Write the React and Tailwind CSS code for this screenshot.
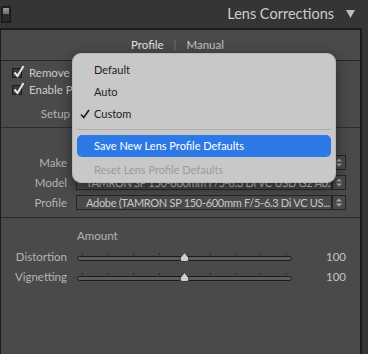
import React from "react";

const font = { fontFamily: "Lato, 'Noto Sans', sans-serif" };

function SwitchIcon() {
  return (
    <div className="w-[10px] h-[17px] border border-[#1a1a1a] bg-[#222] flex flex-col p-[1px]">
      <div className="flex-1 bg-gradient-to-b from-[#9a9a9a] to-[#6e6e6e]" />
      <div className="flex-1 bg-[#2c2c2c]" />
    </div>
  );
}

function Checkbox() {
  return (
    <div className="relative w-[10px] h-[10px] border border-[#1b1b1b] bg-[#3a3a3a] shrink-0">
      <svg className="absolute left-[0px] top-[-4px]" width="12" height="13" viewBox="0 0 12 13">
        <path d="M1.5 7.5 L4.5 11 L10.5 1" fill="none" stroke="#e6e6e6" strokeWidth="2" />
      </svg>
    </div>
  );
}

function Stepper() {
  return (
    <div className="w-[14px] h-[15px] border border-[#252525] bg-[#4a4a4a] flex items-center justify-center">
      <svg width="8" height="11" viewBox="0 0 8 11">
        <path d="M1 4.5 L4 1.5 L7 4.5 Z" fill="#a8a8a8" />
        <path d="M1 6.5 L4 9.5 L7 6.5 Z" fill="#a8a8a8" />
      </svg>
    </div>
  );
}

function SelectRow({ label, value }) {
  return (
    <div className="flex items-center h-[15px]">
      <div className="w-[66px] text-right text-[11.5px] text-[#b4b4b4]">{label}</div>
      <div className="ml-[9px] flex items-center">
        <div className="w-[256px] h-[15px] border border-[#252525] bg-[#4a4a4a] pl-[9px] text-[11px] tracking-[-0.3px] leading-[13px] text-[#c8c8c8] whitespace-nowrap overflow-hidden">
          {value}
        </div>
        <Stepper />
      </div>
    </div>
  );
}

function Slider({ label }) {
  const ticks = [5, 30, 56, 82, 107, 133, 158, 183, 209];
  return (
    <div className="flex items-center h-[20px]">
      <div className="w-[66px] text-right text-[11.5px] text-[#b4b4b4]">{label}</div>
      <div className="relative ml-[10px] w-[215px] h-[20px]">
        {ticks.map((t) => (
          <div key={t} className="absolute top-[6px] w-[1px] h-[2px] bg-[#2a2a2a]" style={{ left: t }} />
        ))}
        <div className="absolute left-0 right-0 top-[9px] h-[5px] rounded-full border border-[#1c1c1c] bg-[#5c5c5c]" />
        <svg className="absolute left-[102px] top-[5px]" width="11" height="10" viewBox="0 0 11 10">
          <path d="M5.5 0.5 L9.5 5.5 Q10.5 9.5 7 9.5 L4 9.5 Q0.5 9.5 1.5 5.5 Z" fill="#cfcfcf" stroke="#2a2a2a" strokeWidth="0.8" />
        </svg>
      </div>
      <div className="ml-auto mr-[14px] text-[11.5px] text-[#c4c4c4]">100</div>
    </div>
  );
}

function Menu() {
  return (
    <div className="absolute left-[72px] top-[53px] w-[264px] h-[130px] rounded-[9px] bg-[#c8c8c8] shadow-[0_4px_14px_rgba(0,0,0,0.45)] border border-[#b8b8b8] text-[11px] text-[#1e1e1e] px-[4px] pt-[5px]">
      <div className="h-[22px] flex items-center pl-[17px]">Default</div>
      <div className="h-[22px] flex items-center pl-[17px]">Auto</div>
      <div className="h-[22px] flex items-center relative pl-[17px]">
        <svg className="absolute left-[3px] top-[6px]" width="10" height="10" viewBox="0 0 10 10">
          <path d="M1 5.5 L3.8 8.5 L9 1" fill="none" stroke="#1e1e1e" strokeWidth="1.6" />
        </svg>
        Custom
      </div>
      <div className="mt-[4px] mb-[5px] h-[1px] bg-[#adadad]" />
      <div className="h-[22px] flex items-center pl-[17px] rounded-[5px] bg-[#2d7ae6] text-white">
        Save New Lens Profile Defaults
      </div>
      <div className="h-[26px] flex items-center pl-[17px] text-[#9b9b9b]">Reset Lens Profile Defaults</div>
    </div>
  );
}

export default function App() {
  return (
    <div className="relative w-[368px] h-[354px] bg-[#353535] overflow-hidden" style={font}>
      <header className="h-[28px] flex items-center pl-[1px] pr-[13px]">
        <SwitchIcon />
        <div className="ml-auto flex items-center gap-[12px]">
          <span className="text-[14.5px] text-[#cdcdcd]">Lens Corrections</span>
          <svg width="9" height="8" viewBox="0 0 9 8">
            <path d="M0 0 L9 0 L4.5 8 Z" fill="#bdbdbd" />
          </svg>
        </div>
      </header>

      <div className="w-[362px] h-[326px] border-t-2 border-l border-r-2 border-[#1c1c1c] bg-[#4a4a4a]">
        <div className="h-[31px] border-b border-[#262626] flex items-center justify-center gap-[10px] text-[11.5px] pr-[6px]">
          <span className="text-[#e2e2e2]">Profile</span>
          <span className="text-[#777]">|</span>
          <span className="text-[#c2c2c2]">Manual</span>
        </div>

        <div className="pt-[3px] h-[67px] border-b border-[#2c2c2c]">
          <div className="h-[17px] flex items-center pl-[11px] gap-[7px] text-[11.5px] text-[#cccccc]">
            <Checkbox />
            <span>Remove Chromatic Aberration</span>
          </div>
          <div className="h-[17px] flex items-center pl-[11px] gap-[7px] text-[11.5px] text-[#cccccc]">
            <Checkbox />
            <span>Enable Profile Corrections</span>
          </div>
          <div className="mt-[7px] h-[17px] flex items-center">
            <div className="w-[69px] text-right text-[11.5px] text-[#b4b4b4]">Setup</div>
          </div>
        </div>

        <div className="pt-[27px] h-[90px] border-b border-[#2c2c2c] flex flex-col gap-[5px]">
          <SelectRow label="Make" value="Tamron" />
          <SelectRow label="Model" value="TAMRON SP 150-600mm F/5-6.3 Di VC USD G2 A0..." />
          <SelectRow label="Profile" value="Adobe (TAMRON SP 150-600mm F/5-6.3 Di VC US..." />
        </div>

        <div className="pt-[10px]">
          <div className="h-[16px] flex items-center pl-[76px] text-[11.5px] text-[#b4b4b4]">Amount</div>
          <div className="mt-[3px]">
            <Slider label="Distortion" />
            <Slider label="Vignetting" />
          </div>
        </div>
      </div>

      <Menu />
    </div>
  );
}
